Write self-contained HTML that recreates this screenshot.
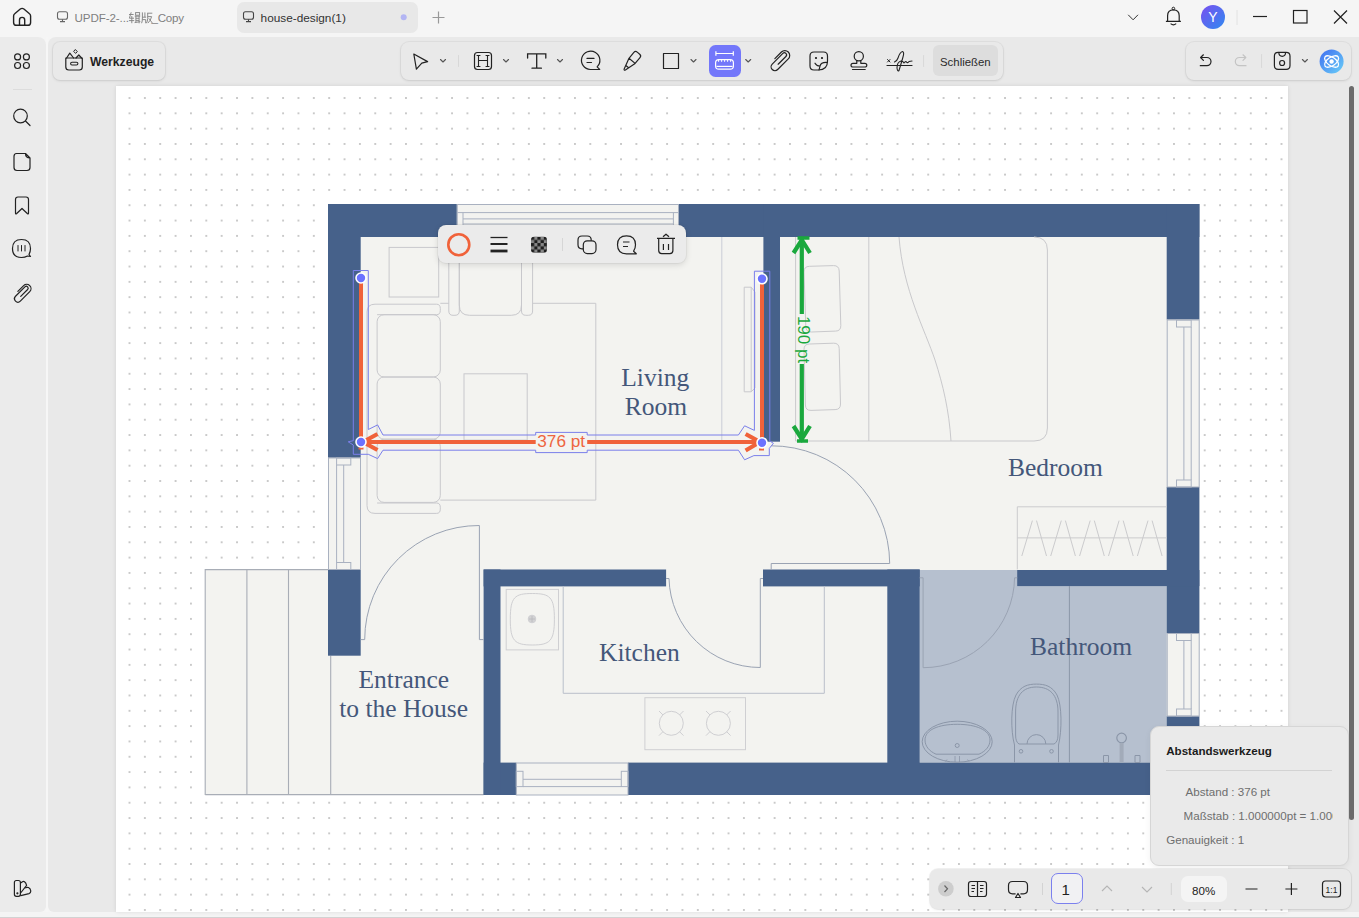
<!DOCTYPE html>
<html><head><meta charset="utf-8">
<style>
*{margin:0;padding:0;box-sizing:border-box}
html,body{width:1359px;height:918px;overflow:hidden;background:#f5f5f5;font-family:"Liberation Sans",sans-serif;position:relative}
.a{position:absolute}
svg{position:absolute;left:0;top:0;overflow:visible}
</style></head><body>
<!-- title bar -->
<div class="a" style="left:0;top:0;width:1359px;height:37px;background:#f5f5f5"></div>
<!-- left sidebar -->
<div class="a" style="left:0;top:37px;width:45.8px;height:875px;background:#ebebeb;border-top-right-radius:8px;border-bottom-right-radius:6px"></div>
<!-- main area -->
<div class="a" style="left:48px;top:37px;width:1311px;height:875px;background:#e9e9e9;border-top-left-radius:8px;border-bottom-left-radius:6px"></div>
<div class="a" style="left:0;top:912px;width:1359px;height:6px;background:#f4f4f4"></div>
<div class="a" style="left:0;top:916.6px;width:1359px;height:1.4px;background:#d2d2d2"></div>
<!-- page -->
<div class="a" style="left:116px;top:86px;width:1172px;height:826px;background:#fff;box-shadow:0 0 4px rgba(0,0,0,0.10)"></div>

<svg id="plan" width="1359" height="918" viewBox="0 0 1359 918">
  <defs>
    <pattern id="dots" x="121.82" y="90.34" width="15.36" height="15.32" patternUnits="userSpaceOnUse">
      <rect x="6.98" y="6.96" width="1.4" height="1.4" fill="#9a9a9a"/>
    </pattern>
  </defs>

  <rect x="122" y="92" width="1164" height="820" fill="url(#dots)"/>
  <!-- floor fill -->
  <path d="M328 204 H1199.4 V795 H330.7 V655.7 H328 Z" fill="#f3f3f0"/>
  <rect x="205" y="569.6" width="125.7" height="225" fill="#f3f3f0"/>
  <!-- deck -->
  <g fill="none" stroke="#a8adb6" stroke-width="1.1">
    <path d="M205.2 795 V569.6 H328"/>
    <path d="M205.2 794.6 H483.6"/>
    <path d="M246.9 569.6 V794.6 M288.5 569.6 V794.6 M330.7 655.7 V794.6"/>
  </g>
  <!-- bathroom fill -->
  <rect x="919.7" y="570" width="247" height="192.5" fill="#b6c0cf"/>
  <!-- walls -->
  <g fill="#46618a">
    <rect x="328" y="204" width="128.8" height="33"/>
    <rect x="679" y="204" width="520.4" height="33"/>
    <rect x="328" y="204" width="32.7" height="253.7"/>
    <rect x="328" y="569.6" width="32.7" height="86.1"/>
    <rect x="1166.7" y="204" width="32.7" height="115.5"/>
    <rect x="1166.7" y="487" width="32.7" height="146.2"/>
    <rect x="1166.7" y="716.3" width="32.7" height="79"/>
    <rect x="483.6" y="762.6" width="32.7" height="32.4"/>
    <rect x="628" y="762.6" width="571.4" height="32.4"/>
    <rect x="483.6" y="569.5" width="16.9" height="225.5"/>
    <rect x="483.6" y="569.5" width="182.5" height="16.9"/>
    <rect x="763" y="569.5" width="156.7" height="16.9"/>
    <rect x="887.3" y="569.5" width="32.4" height="225.5"/>
    <rect x="1017.2" y="570" width="182.2" height="16.1"/>
    <rect x="763.4" y="204" width="16.6" height="237.7"/>
  </g>
  <!-- windows -->
  <g fill="none" stroke="#a9b1c0" stroke-width="1">
    <!-- top window -->
    <rect x="457.3" y="204.5" width="221.2" height="32"/>
    <path d="M457.3 212.6 H678.5 M463 218.9 H673.4 M463 224 H673.4 M463 212.6 V237 M673.4 212.6 V237"/>
    <!-- left window -->
    <rect x="328.5" y="458" width="32" height="111.5"/>
    <path d="M336.6 465 V562.5 M343.7 465 V562.5"/>
    <rect x="336.6" y="458" width="14.2" height="7"/>
    <rect x="336.6" y="562.5" width="14.2" height="7"/>
    <!-- right window 1 -->
    <rect x="1167.2" y="320" width="32" height="167"/>
    <path d="M1183.9 327 V480 M1191.2 327 V480"/>
    <rect x="1176.5" y="320" width="14.7" height="7"/>
    <rect x="1176.5" y="480" width="14.7" height="7"/>
    <!-- right window 2 -->
    <rect x="1167.2" y="633.5" width="32" height="82.5"/>
    <path d="M1183.9 640.5 V709 M1191.2 640.5 V709"/>
    <rect x="1176.5" y="633.5" width="14.7" height="7"/>
    <rect x="1176.5" y="709" width="14.7" height="7"/>
    <!-- bottom window -->
    <rect x="516.3" y="763" width="111.7" height="32"/>
    <path d="M523 779.3 H621 M523 786.6 H621"/>
    <rect x="516.3" y="771.3" width="6.7" height="15.3"/>
    <rect x="621.3" y="771.3" width="6.7" height="15.3"/>
  </g>
  <!-- doors -->
  <g fill="none" stroke="#9aa3b3" stroke-width="1">
    <path d="M479.4 525.5 V639.6 H483.6 M479.4 525.5 A114.2 114.2 0 0 0 364.7 639.6 H360.7"/>
    <path d="M771.2 445.8 A118.3 118.3 0 0 1 889.7 563.5 H771.2 V570"/>
    <path d="M666.1 578.5 H669 A91.3 91.3 0 0 0 760.3 667.5 V578.5 H763"/>
    <path d="M919.7 577.8 H923.1 V667.7 A91.5 91.5 0 0 0 1014.6 577.8 H1017.2"/>
  </g>
  <!-- kitchen -->
  <g fill="none" stroke="#b9bfca" stroke-width="1">
    <path d="M563.2 586.4 V693.3 H824.3 V586.4"/>
  </g>
  <g fill="none" stroke="#cfcfd2" stroke-width="1">
    <rect x="506.2" y="589.4" width="52.3" height="60.5"/>
    <path d="M532.3 593.5 C550 593.5 554.4 597 554.4 619.2 C554.4 641 550 645 532.3 645 C514.6 645 510.3 641 510.3 619.2 C510.3 597 514.6 593.5 532.3 593.5 Z"/>
    <circle cx="532" cy="619" r="3.8" fill="#d2d2d4"/><path d="M529 619 H535 M532 616 V622" stroke="#b8b8bb" stroke-width="0.8"/>
    <rect x="644.9" y="697.7" width="100.6" height="52"/>
    <circle cx="671.3" cy="723.3" r="12"/>
    <circle cx="718.4" cy="723.3" r="12"/>
    <path d="M659 711 l4 4 M683.5 711 l-4 4 M659 735.6 l4 -4 M683.5 735.6 l-4 -4"/>
    <path d="M706 711 l4 4 M730.6 711 l-4 4 M706 735.6 l4 -4 M730.6 735.6 l-4 -4"/>
  </g>
  <!-- living room furniture -->
  <g fill="none" stroke="#c8c8cc" stroke-width="1">
    <rect x="389.1" y="247.4" width="49.6" height="49.6"/>
    <path d="M440.3 303.3 H448.8 M532.6 303.3 H595.8 V500.1 H440.3"/>
    <path d="M448.8 237 V311 Q448.8 315.3 453 315.3 H455 Q459.3 315.3 459.3 311 V237 M459.3 237 V305 Q459.3 315.3 469.5 315.3 H511.3 Q521.5 315.3 521.5 305 V237 M521.5 237 V311 Q521.5 315.3 525.8 315.3 H528.3 Q532.6 315.3 532.6 311 V237"/>
    <path d="M377.1 314.7 H436.5 Q440.3 314.7 440.3 310.5 V308.5 Q440.3 304.2 436.5 304.2 H375 Q367 304.2 367 312 V505.5 Q367 513.4 375 513.4 H436.5 Q440.3 513.4 440.3 509.2 V507.2 Q440.3 503 436.5 503 H377.1"/>
    <rect x="377.1" y="314.7" width="63.2" height="62.3" rx="7"/>
    <rect x="377.1" y="377" width="63.2" height="62.2" rx="7"/>
    <rect x="377.1" y="439.2" width="63.2" height="63.2" rx="7"/>
    <rect x="464" y="373.8" width="63.2" height="66.3"/>
    <path d="M744.2 287.2 H751.2 L755 292 V388 L751.2 391.8 H744.2 Z M751.2 287.2 V391.8"/>
  </g>
  <path d="M721.8 237 V441.7" stroke="#c9ccd6" stroke-width="1" fill="none"/>
  <!-- bedroom -->
  <g fill="none" stroke="#c9c9cc" stroke-width="1">
    <path d="M795.6 237 V441 H1034 Q1047.4 441 1047.4 428 V250 Q1047.4 237 1034 237"/>
    <path d="M868.8 237 V441"/>
    <path d="M899 237 C903 290 925 330 935 360 C943 385 949 410 951 441"/>
    <path d="M809.5 266.3 L833.5 265.6 Q839 265.5 839.2 271 L840.8 325.5 Q841 331 835.5 331.1 L811.5 332 Q806 332.1 805.8 326.5 L804 272 Q803.9 266.4 809.5 266.3 Z"/>
    <path d="M809.5 344 L833.5 343.2 Q839 343 839.2 348.5 L840.5 404 Q840.6 409.5 835.1 409.6 L811 410.4 Q805.5 410.5 805.4 405 L804 349.5 Q803.9 344.1 809.5 344 Z"/>
  </g>
  <g fill="none" stroke="#b9bfca" stroke-width="1">
    <path d="M1017.3 569.4 V506.8 H1166.7 M1017.3 537.9 H1166.7" stroke="#cbcbcd"/>
    <path d="M1021.8 556 L1032.4 520.6 M1036.5 520.6 L1046.5 556 M1050.7 556 L1061.3 520.6 M1065.4 520.6 L1075.4 556 M1079.6 556 L1090.2 520.6 M1094.3 520.6 L1104.3 556 M1108.5 556 L1119.1 520.6 M1123.2 520.6 L1133.2 556 M1137.4 556 L1148.0 520.6 M1152.1 520.6 L1162.1 556" stroke="#cbcbcd"/>
  </g>
  <!-- bathroom fixtures -->
  <g fill="none" stroke="#8b96a8" stroke-width="1">
    <path d="M1069.4 586 V762.5"/>
    <ellipse cx="957.2" cy="741.7" rx="35" ry="20.5"/>
    <path d="M936 754.2 H979 C986 751 990 746 990 740 C990 730 976 724.3 957.2 724.3 C938 724.3 925 730 925 740 C925 746 929 751 936 754.2 Z"/>
    <circle cx="957.2" cy="745.5" r="2"/>
    <path d="M955 756 V762 M959.5 756 V762 M947 759.5 l-1.5 2 M967.5 759.5 l1.5 2" stroke-width="0.8"/>
    <path d="M1014.5 762.5 V745 C1010.5 730 1010.8 705 1016 695 C1021 686 1028 684.1 1036.4 684.1 C1045 684.1 1052 686 1057 695 C1062 705 1062.1 730 1058.5 745 V762.5"/>
    <path d="M1019 744 H1054 Q1058 742 1058 735 V712 C1058 695 1050 687 1036.4 687 C1023 687 1015.6 695 1015.6 712 V735 Q1015.6 742 1019 744 Z"/>
    <path d="M1027 744 A9.4 9.4 0 0 1 1045.8 744"/>
    <circle cx="1021" cy="751.3" r="1.8"/><circle cx="1051.5" cy="751.3" r="1.8"/>
    <circle cx="1121.6" cy="738" r="4.8" stroke-width="1.2"/>
    <rect x="1119.6" y="743" width="4" height="19.5" fill="#a2abb9" stroke="none"/>
    <path d="M1103.5 755.5 h5 v7 h-5z M1135 755.5 h5 v7 h-5z"/>
  </g>
  <!-- labels -->
  <g font-family="Liberation Serif" font-size="25.5" fill="#44577a">
    <text x="621.3" y="386">Living</text>
    <text x="624.7" y="415">Room</text>
    <text x="1008" y="475.7">Bedroom</text>
    <text x="358.5" y="688">Entrance</text>
    <text x="339.2" y="717">to the House</text>
    <text x="599" y="661.3">Kitchen</text>
    <text x="1030" y="655.4">Bathroom</text>
  </g>
</svg>

<!-- ===== TITLE BAR ===== -->
<svg width="1359" height="40" style="position:absolute;left:0;top:0">
  <g fill="none" stroke="#222" stroke-width="1.4" stroke-linejoin="round" stroke-linecap="round">
    <!-- home -->
    <path d="M13.6 16 Q13.6 14.6 14.7 13.8 L20.3 9 Q22.1 7.7 23.9 9 L29.5 13.8 Q30.6 14.6 30.6 16 V22.4 Q30.6 25.3 27.7 25.3 H16.5 Q13.6 25.3 13.6 22.4 Z"/>
    <path d="M19.5 25.3 V20 Q19.5 17.4 22.1 17.4 Q24.7 17.4 24.7 20 V25.3"/>
  </g>
  <!-- tab 2 bg -->
  <rect x="237" y="2" width="181" height="31" rx="7" fill="#e8e8e8"/>
  <g fill="none" stroke="#666" stroke-width="1.1">
    <rect x="57.5" y="11.8" width="10" height="7.5" rx="2"/>
    <path d="M62.5 19.3 V21.6 M60 21.6 H65"/>
  </g>
  <g fill="none" stroke="#444" stroke-width="1.1">
    <rect x="243.5" y="11.8" width="10" height="7.5" rx="2"/>
    <path d="M248.5 19.3 V21.6 M246 21.6 H251"/>
  </g>
  <circle cx="403.7" cy="17.2" r="3" fill="#b3b5f3"/>
  <path d="M432.5 17.5 H444.5 M438.5 11.5 V23.5" stroke="#999" stroke-width="1.2"/>
  <!-- right side -->
  <path d="M1128.2 14.8 L1133.1 19.8 L1138 14.8" fill="none" stroke="#333" stroke-width="1"/>
  <g fill="none" stroke="#222" stroke-width="1.3" stroke-linejoin="round">
    <path d="M1165.9 21.4 H1180.9 M1167.6 21.4 V15.8 Q1167.6 9.9 1173.4 9.9 Q1179.2 9.9 1179.2 15.8 V21.4" stroke-width="1.2"/>
    <circle cx="1173.4" cy="8.5" r="1.3" stroke-width="1"/>
    <path d="M1170.6 23.6 Q1173.4 26.2 1176.2 23.6" stroke-width="1.1"/>
  </g>
  <defs>
    <linearGradient id="av" x1="0" y1="0" x2="1" y2="1">
      <stop offset="0" stop-color="#7a4ff0"/><stop offset="1" stop-color="#2f8af0"/>
    </linearGradient>
    <linearGradient id="ai" x1="0" y1="0" x2="1" y2="1">
      <stop offset="0" stop-color="#3f6df0"/><stop offset="1" stop-color="#6ad0f8"/>
    </linearGradient>
  </defs>
  <circle cx="1213" cy="17" r="12" fill="url(#av)"/>
  <text x="1213" y="22.3" text-anchor="middle" font-family="Liberation Sans" font-size="14" fill="#fff">Y</text>
  <path d="M1237 10 V25" stroke="#e2e2e2"/>
  <path d="M1253 16.5 H1267" stroke="#222" stroke-width="1.2"/>
  <rect x="1293.5" y="10.5" width="13.5" height="12.5" fill="none" stroke="#222" stroke-width="1.2"/>
  <path d="M1334 10.5 L1347 23.5 M1347 10.5 L1334 23.5" stroke="#222" stroke-width="1.2"/>
</svg>
<div class="a" style="left:74.6px;top:11px;font-size:11.6px;color:#808080;white-space:nowrap;letter-spacing:-0.1px">UPDF-2-...</div>
<div class="a" style="left:151.5px;top:11px;font-size:11.6px;color:#808080;white-space:nowrap;letter-spacing:-0.25px">_Copy</div>
<svg width="30" height="30" viewBox="125 5 30 30" style="position:absolute;left:125px;top:5px">
  <g fill="none" stroke="#858585" stroke-width="0.95">
    <path d="M129 14.5 H133.6 M131.2 12.3 L129.4 18.2 H134 M131.8 16 V23.2 M128.9 20.6 H134.2"/>
    <rect x="135.6" y="12.6" width="4" height="2.6"/>
    <path d="M134.8 16.2 H140.2 M135.9 16.2 V22.4 M139.1 16.2 V23.3 M135.9 18.3 H139.1 M135.9 20.4 H139.1 M134.6 22.6 L140.3 21.6"/>
    <path d="M142.4 12.4 V18 Q142.4 21.5 141.6 23.2 M144.9 12.4 V17.2 M142.4 17.2 H146.1 M142.4 19.6 H145.7 V23.2"/>
    <path d="M147.2 13.2 H152.3 M147.7 13.2 V18.5 Q147.6 21.6 146.3 23.2 M147.7 16.6 H151.6 Q150.9 20.3 147.9 23.1 M148.8 18.3 L152.3 23"/>
  </g>
</svg>
<div class="a" style="left:260.6px;top:11px;font-size:11.8px;color:#333;white-space:nowrap">house-design(1)</div>

<!-- ===== TOOLBAR ROW ===== -->
<div class="a" style="left:52.5px;top:42px;width:112px;height:38px;background:#e9e9e9;border-radius:7px;box-shadow:0 1px 3px rgba(0,0,0,0.10),0 0 0 1px rgba(0,0,0,0.035)"></div>
<div class="a" style="left:90px;top:55px;font-size:12.2px;font-weight:700;color:#1f1f1f;white-space:nowrap">Werkzeuge</div>
<div class="a" style="left:400.5px;top:42px;width:602px;height:38px;background:#e9e9e9;border-radius:8px;box-shadow:0 1px 3px rgba(0,0,0,0.10),0 0 0 1px rgba(0,0,0,0.035)"></div>
<div class="a" style="left:1186px;top:41.5px;width:165px;height:38.5px;background:#e9e9e9;border-radius:8px;box-shadow:0 1px 3px rgba(0,0,0,0.10),0 0 0 1px rgba(0,0,0,0.035)"></div>
<div class="a" style="left:708.8px;top:45px;width:32px;height:31.5px;background:#7377fa;border-radius:6.5px"></div>
<div class="a" style="left:932.5px;top:45.4px;width:65.5px;height:31px;background:#dddddd;border-radius:6px"></div>
<div class="a" style="left:940px;top:55.6px;font-size:11.4px;color:#2a2a2a;white-space:nowrap">Schließen</div>
<svg width="1359" height="100" style="position:absolute;left:0;top:0">
  <g fill="none" stroke="#222" stroke-width="1.2" stroke-linejoin="round" stroke-linecap="round">
    <!-- werkzeuge icon -->
    <path d="M65.8 58 H82.3 V67 Q82.3 70 79.3 70 H68.8 Q65.8 70 65.8 67 Z"/>
    <rect x="70.6" y="62.2" width="7.3" height="2.8" rx="1.4" stroke-width="1.1"/>
    <path d="M66.6 58 L69.8 53.2 L73.6 58 M76 58 L78.8 55 L81.6 58"/>
    <path d="M75.6 49.8 L77.3 51.6 L75.6 53.4 L73.9 51.6 Z" stroke-width="1"/>
    <!-- sidebar grid -->
    <circle cx="17.6" cy="56.9" r="3"/><circle cx="26.4" cy="56.9" r="3"/>
    <circle cx="17.6" cy="65.5" r="3"/><circle cx="26.4" cy="65.5" r="3"/>
    <!-- cursor -->
    <path d="M413.8 54 L427.6 61.6 L421.8 63.2 L416.4 69.2 Z"/>
    <!-- H -->
    <rect x="474.5" y="52.5" width="17" height="17" rx="3"/>
    <path d="M478.5 55.5 V66.5 M487.5 55.5 V66.5 M478.5 60.5 H487.5 M477 55.5 H480 M486 55.5 H489 M477 66.5 H480 M486 66.5 H489" stroke-width="1.1"/>
    <!-- T -->
    <path d="M527.6 58 V53.9 H545.8 V58 M536.7 53.9 V68.2 M532 68.2 H541.4" stroke-width="1.3" stroke-linejoin="miter"/>
    <!-- comment -->
    <path d="M599.7 69.4 L597.1 66.9 A9.2 9.2 0 1 0 590.3 69.5 Z"/>
    <path d="M587 58.4 H594 M587 62.5 H591.5"/>
    <!-- pen -->
    <path transform="translate(631.4 61.6) rotate(40)" d="M-4 -1 V-8.6 Q-4 -11 -1.6 -11 H1.6 Q4 -11 4 -8.6 V-1 H-4 L-0.8 10.3 Q0 11.9 0.8 10.3 L4 -1 M-1.8 6.5 H1.8"/>
    <!-- rect -->
    <rect x="663.5" y="53.5" width="15" height="15"/>
    <!-- paperclip -->
    <path transform="translate(779.9 60.4) rotate(45) scale(1.13)" stroke-width="1.06" d="M -4.3 2 V -6.2 A 4.3 4.3 0 0 1 4.3 -6.2 V 7.1 A 3.4 3.4 0 0 1 -2.5 7.1 V -6.2 A 1.9 1.9 0 0 1 1.3 -6.2 V 3.5"/>
    <!-- sticker -->
    <path d="M827.5 61 V56 Q827.5 52 823.5 52 H814 Q810 52 810 56 V66 Q810 70 814 70 H818.5 Q827.5 70 827.5 61 Z"/>
    <path d="M827.3 62.5 Q821 62 820 66 Q819.5 68.5 819 70"/>
    <circle cx="816" cy="58" r="0.5" fill="#222"/><circle cx="822" cy="58" r="0.5" fill="#222"/>
    <path d="M815 63.2 Q816.5 66 819.5 66"/>
    <!-- stamp -->
    <circle cx="858.8" cy="56.2" r="4.6"/>
    <path d="M856.8 60.6 V63.3 H853 Q851 63.3 851 65.2 Q851 67 853 67 H864.8 Q866.8 67 866.8 65.2 Q866.8 63.3 864.8 63.3 H860.8 V60.6 M852.5 69.5 H865.2"/>
    <!-- signature -->
    <path d="M887 65.5 H912" stroke-width="1.2"/>
    <path d="M887.5 59.5 L890 62 M890 59.5 L887.5 62" stroke-width="1"/>
    <path d="M894.5 62 Q897 61 898 58 Q900 52 902.5 51.5 Q904.5 52 903 57 Q901 64 899 70.5 Q897.5 72 897 68 Q897 62 901 61 Q903 61 904 63 Q905.5 61 906.5 62 Q907.5 63.5 909 61.5 Q910.5 61 912 61" stroke-width="1.1"/>
    <!-- separators -->
    <path d="M458.5 55.5 V66.5 M923.6 55.5 V66.5 M1261.6 54.5 V67.5" stroke="#d8d8d8" stroke-width="1"/>
    <!-- undo -->
    <path d="M1203.4 54.8 L1200.6 57.5 L1203.4 60.3 M1200.6 57.5 H1206.9 A4.1 4.1 0 0 1 1206.9 65.7 H1200.3"/>
    <!-- redo -->
    <path d="M1243 54.8 L1245.8 57.5 L1243 60.3 M1245.8 57.5 H1239.4 A4.1 4.1 0 0 0 1239.4 65.7 H1246" stroke="#c4c4c4"/>
    <!-- save -->
    <path d="M1278.2 52.3 H1286.2 Q1290 52.3 1290 56.1 V65.6 Q1290 69.4 1286.2 69.4 H1278.2 Q1274.4 69.4 1274.4 65.6 V56.1 Q1274.4 52.3 1278.2 52.3 Z"/>
    <path d="M1278.8 52.5 Q1279 56.3 1282.2 56.3 Q1285.4 56.3 1285.6 52.5"/>
    <circle cx="1282.1" cy="63" r="2.5"/>
  </g>
  <!-- chevrons -->
  <g fill="none" stroke="#555" stroke-width="1.1" stroke-linecap="round" stroke-linejoin="round">
    <path d="M440.5 59.5 L443 62 L445.5 59.5"/>
    <path d="M503.5 59.5 L506 62 L508.5 59.5"/>
    <path d="M557.5 59.5 L560 62 L562.5 59.5"/>
    <path d="M691 59.5 L693.5 62 L696 59.5"/>
    <path d="M745.7 59.5 L748.2 62 L750.7 59.5"/>
    <path d="M1302.4 59.5 L1304.9 62 L1307.4 59.5"/>
  </g>
  <!-- measure icon (white) -->
  <g fill="none" stroke="#fff" stroke-width="1.2" stroke-linecap="butt" stroke-linejoin="round">
    <path d="M715.9 51.2 V55.8 M733.3 51.2 V55.8 M715.9 53.5 H733.3"/>
    <path d="M718.8 59.6 H730.2 Q733.4 59.6 733.4 62.8 V66 Q733.4 69.2 730.2 69.2 H718.8 Q715.6 69.2 715.6 66 V62.8 Q715.6 59.6 718.8 59.6 Z"/>
    <path d="M716.5 66.4 H732.5"/>
    <path d="M718.6 59.6 V61.8 M721.6 59.6 V61.8 M724.6 59.6 V61.8 M727.6 59.6 V61.8 M730.6 59.6 V61.8" stroke-width="1"/>
  </g>
  <!-- AI -->
  <circle cx="1331.6" cy="61.5" r="12" fill="url(#ai)"/>
  <g fill="none" stroke="#fff" stroke-width="1.3">
    <ellipse cx="1331.6" cy="61.5" rx="8" ry="4.2" transform="rotate(35 1331.6 61.5)"/>
    <ellipse cx="1331.6" cy="61.5" rx="8" ry="4.2" transform="rotate(-35 1331.6 61.5)"/>
  </g>
  <circle cx="1331.6" cy="61.5" r="2.2" fill="#fff"/>
  <path d="M13 89.5 H32" stroke="#dcdcdc"/>
</svg>

<!-- ===== SIDEBAR ICONS ===== -->
<svg width="60" height="918" style="position:absolute;left:0;top:0">
  <g fill="none" stroke="#222" stroke-width="1.2" stroke-linejoin="round" stroke-linecap="round">
    <circle cx="20.5" cy="116" r="6.8"/>
    <path d="M25.5 121 L30 125.5"/>
    <path d="M16.5 153.5 H25.5 L30 158 V167.5 Q30 170.5 27 170.5 H17 Q14 170.5 14 167.5 V156.5 Q14 153.5 16.5 153.5 Z M25.5 153.5 Q25.5 158 30 158"/>
    <path d="M15.5 199.5 Q15.5 197 18 197 H26 Q28.5 197 28.5 199.5 V213 Q28.5 214.5 27.3 213.5 L22 208.5 L16.7 213.5 Q15.5 214.5 15.5 213 Z"/>
    <path d="M29 254.5 L30.5 256.5 L27.5 256 Q25 257.5 21.5 257.5 Q12.5 257.5 12.5 248.5 Q12.5 239.5 21.5 239.5 Q30.5 239.5 30.5 248.5 Q30.5 251.5 29 254.5 Z"/>
    <path d="M18 245.5 V251 M21.5 245.5 V251 M25 245.5 V251" stroke-width="1"/>
    <path transform="translate(22.3 293) rotate(45)" d="M -4.3 2 V -6.2 A 4.3 4.3 0 0 1 4.3 -6.2 V 7.1 A 3.4 3.4 0 0 1 -2.5 7.1 V -6.2 A 1.9 1.9 0 0 1 1.3 -6.2 V 3.5"/>
    <rect x="14.4" y="880.5" width="6" height="15.8" rx="2"/>
    <path d="M20.6 883 L22.5 881.7 Q23.5 881 24.5 881.8 Q26 883 26.6 885.3 L21 892.5"/>
    <path d="M25.5 887.8 Q27 887 28.5 887.5 Q30.5 888.5 30.8 891 Q30.8 893 29 893.6 L20.8 895.6"/>
    <circle cx="17.4" cy="893.3" r="0.5" fill="#222"/>
  </g>
</svg>
<div class="a" style="left:45.8px;top:37px;width:2.2px;height:875px;background:#f6f6f6"></div>

<!-- ===== OVERLAYS ===== -->
<svg width="1359" height="918" style="position:absolute;left:0;top:0">
  <!-- selection outline of orange measure -->
  <g fill="none" stroke="#7a7fea" stroke-width="1">
    <path d="M353.3 270.5 H368.3 V429.5 L377.6 424.9 L383 435 H535.7 V432.4 H587.2 V435 H738.4 L744.6 425.8 L754.4 430.4 V271.2 H769.8 V441 L773.4 443.3 L769.3 448.4 V455.6 H753.9 L744.6 459.8 L738.4 450.2 H587.2 V452.6 H535.7 V450.2 H383 L377.6 458.6 L368.3 454.3 H353.3 V445 L348.2 441.8 L353.3 440.7 Z"/>
  </g>
  <!-- orange lines -->
  <g stroke="#f0623a" stroke-width="4" fill="none" stroke-linecap="butt" stroke-linejoin="miter">
    <path d="M361 278 V442"/>
    <path d="M762 278.5 V442"/>
    <path d="M361 442 H535.7 M587.2 442 H762"/>
    <path d="M377.5 434 L363 442 L377.5 450" stroke-width="4.2"/>
    <path d="M745.6 434 L760 442 L745.6 450.5" stroke-width="4.2"/>
  </g>
  <rect x="535.7" y="432.2" width="51.5" height="20.5" fill="#f3f3f0" opacity="0"/>
  <text x="561.2" y="446.6" text-anchor="middle" font-family="Liberation Sans" font-size="17.2" fill="#ee6540">376 pt</text>
  <path d="M759 449.5 H764 M358.5 448.6 H363.5" stroke="#f0623a" stroke-width="2"/>
  <!-- endpoints -->
  <g fill="#6b72ff" stroke="#fff" stroke-width="1.6">
    <circle cx="361" cy="278" r="5"/>
    <circle cx="762" cy="278.8" r="5"/>
    <circle cx="361" cy="442" r="5"/>
    <circle cx="762" cy="442.7" r="5"/>
  </g>
  <!-- green arrow -->
  <g stroke="#1aa83d" stroke-width="4.2" fill="none">
    <path d="M801.8 238 V314 M801.8 364 V440"/>
    <path d="M793.5 253 L801.8 240 L810 253"/>
    <path d="M793.5 426 L801.8 439 L810 426"/>
    <path d="M797.5 238 H809.5 M797 441 H808" stroke-width="3.5"/>
  </g>
  <text transform="translate(797.6 339.5) rotate(90)" text-anchor="middle" font-family="Liberation Sans" font-size="17" fill="#1aa83d">190 pt</text>
</svg>
<!-- popup toolbar -->
<div class="a" style="left:438.3px;top:224.6px;width:247.5px;height:38.3px;background:#ebebeb;border-radius:8px;box-shadow:0 2px 6px rgba(0,0,0,0.12),0 0 0 1px rgba(0,0,0,0.04)"></div>
<svg width="1359" height="918" style="position:absolute;left:0;top:0">
  <circle cx="458.8" cy="244.7" r="10.5" fill="none" stroke="#f0623a" stroke-width="2.6"/>
  <path d="M490.5 237.5 H507.5" stroke="#222" stroke-width="1.3"/>
  <path d="M490.5 244 H507.5" stroke="#222" stroke-width="2"/>
  <path d="M490.5 251 H507.5" stroke="#222" stroke-width="2.8"/>
  <defs>
    <pattern id="chk" x="531" y="236.7" width="6.4" height="6.4" patternUnits="userSpaceOnUse">
      <rect width="6.4" height="6.4" fill="#888"/>
      <rect width="3.2" height="3.2" fill="#1e1e1e"/><rect x="3.2" y="3.2" width="3.2" height="3.2" fill="#1e1e1e"/>
    </pattern>
  </defs>
  <rect x="531" y="236.7" width="16" height="16" rx="3" fill="url(#chk)"/>
  <path d="M562.5 238 V251" stroke="#d6d6d6"/>
  <g fill="none" stroke="#222" stroke-width="1.2" stroke-linejoin="round">
    <path d="M583.4 248.8 H582 Q578 248.8 578 244.8 V240 Q578 236 582 236 H587.2 Q591.2 236 591.2 240 V240.8"/>
    <rect x="583.3" y="240.8" width="12.7" height="12.8" rx="4"/>
    <path d="M636.3 253.8 L633.6 251.2 Q635.5 248.5 635.5 244.8 Q635.5 235.8 626.5 235.8 Q617.5 235.8 617.5 244.8 Q617.5 253.8 626.5 253.8 Z"/>
    <path d="M623 242 H629.5 M623 246.5 H628"/>
    <path d="M657 238.4 H675 M658.7 238.4 V250.6 Q658.7 253.6 661.7 253.6 H669.9 Q672.9 253.6 672.9 250.6 V238.4 M663 236.8 L666 234.2 L669 236.8 M663.4 244 V250 M668.5 244 V250"/>
  </g>
</svg>
<!-- info panel -->
<div class="a" style="left:1149.8px;top:725.5px;width:199px;height:140px;background:#eaeaea;border:1px solid #d6d6d6;border-radius:9px;box-shadow:0 2px 6px rgba(0,0,0,0.06);overflow:hidden">
  <div class="a" style="left:15.4px;top:17.2px;font-size:11.6px;font-weight:700;color:#1c1c1c;white-space:nowrap">Abstandswerkzeug</div>
  <div class="a" style="left:15.4px;top:43.7px;width:166px;height:1px;background:#d3d3d3"></div>
  <div class="a" style="left:34.8px;top:58.2px;font-size:11.6px;color:#6e6e6e;white-space:nowrap">Abstand : 376 pt</div>
  <div class="a" style="left:32.8px;top:82.3px;width:149px;overflow:hidden;font-size:11.6px;color:#6e6e6e;white-space:nowrap">Maßstab : 1.000000pt = 1.000000pt</div>
  <div class="a" style="left:15.4px;top:106px;font-size:11.6px;color:#6e6e6e;white-space:nowrap">Genauigkeit : 1</div>
</div>
<!-- scrollbar -->
<div class="a" style="left:1349px;top:86px;width:5px;height:733.5px;background:#6b6b6b;border-radius:3px"></div>
<!-- bottom toolbar -->
<div class="a" style="left:930px;top:869.4px;width:421px;height:39.2px;background:#e9e9e9;border-radius:8px;box-shadow:0 1px 3px rgba(0,0,0,0.08),0 0 0 1px rgba(0,0,0,0.05)"></div>
<div class="a" style="left:1051.1px;top:873.3px;width:31.6px;height:31.2px;background:#f1f1f3;border:1px solid #7b80ee;border-radius:7px"></div>
<div class="a" style="left:1181px;top:876px;width:45.8px;height:26px;background:#f4f4f4;border-radius:7px"></div>
<div class="a" style="left:1061.5px;top:881px;font-size:15px;color:#222;white-space:nowrap">1</div>
<div class="a" style="left:1192px;top:883.6px;font-size:11.6px;color:#222;white-space:nowrap">80%</div>
<svg width="1359" height="918" style="position:absolute;left:0;top:0">
  <circle cx="945.9" cy="888.8" r="7.8" fill="#cdcdcd"/>
  <path d="M944.5 885.5 L947.5 888.8 L944.5 892" fill="none" stroke="#666" stroke-width="1.2"/>
  <g fill="none" stroke="#222" stroke-width="1.2" stroke-linejoin="round">
    <rect x="968.5" y="881.5" width="18" height="15" rx="2.5"/>
    <path d="M977.5 881.5 V896.5 M971.5 885.5 H975 M971.5 888.5 H975 M971.5 891.5 H974 M980 885.5 H983.5 M980 888.5 H983.5 M980 891.5 H982.5"/>
    <path d="M1015.6 893.8 H1012.5 Q1008.5 893.8 1008.5 889.8 V885.5 Q1008.5 881.5 1012.5 881.5 H1023.5 Q1027.5 881.5 1027.5 885.5 V889.8 Q1027.5 893.8 1023.5 893.8 H1020.4"/>
    <path d="M1018 893.5 L1020.5 897.5 H1015.5 Z"/>
    <rect x="1322.5" y="881" width="18" height="16" rx="3"/>
  </g>
  <text x="1331.5" y="892.5" text-anchor="middle" font-family="Liberation Sans" font-size="8.5" fill="#222">1:1</text>
  <path d="M1042.5 883 V895 M1171.3 883 V895" stroke="#d3d3d3"/>
  <path d="M1102 891 L1107 886 L1112 891" fill="none" stroke="#b5b5b5" stroke-width="1.1"/>
  <path d="M1142 887 L1147 892 L1152 887" fill="none" stroke="#b5b5b5" stroke-width="1.1"/>
  <path d="M1245.5 889 H1257.5 M1285.4 889 H1297.4 M1291.4 883 V895" stroke="#222" stroke-width="1.2"/>
</svg>
</body></html>
